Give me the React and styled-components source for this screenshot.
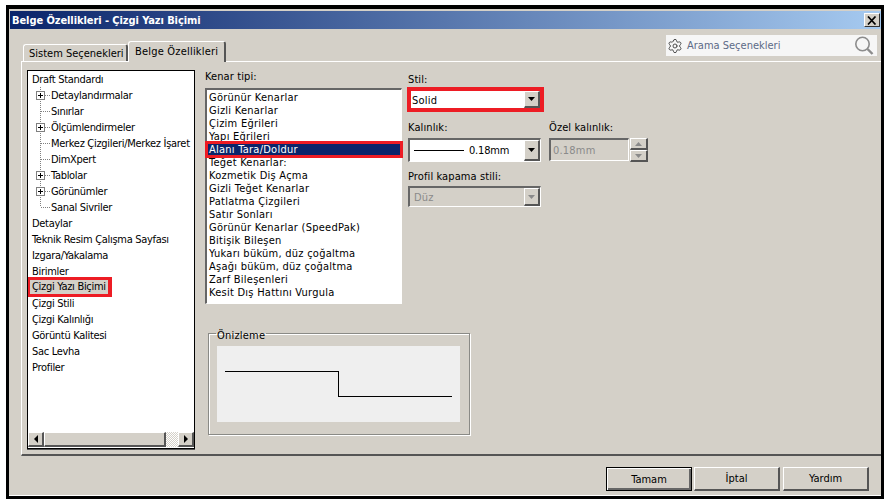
import React from "react";
import styled, { createGlobalStyle, css } from "styled-components";
import { Settings } from "lucide-react";

const GlobalStyle = createGlobalStyle`
  html, body {
    margin: 0;
    padding: 0;
    background: #fff;
  }
  body {
    font-family: "DejaVu Sans", "Liberation Sans", sans-serif;
    font-stretch: condensed;
    font-size: 11px;
    color: #000;
  }
`;

const raised = css`
  border-style: solid;
  border-width: 1px 2px 2px 1px;
  border-color: #fff #555 #555 #fff;
  background: #d4d0c8;
`;

const sunken = css`
  border-style: solid;
  border-width: 2px 1px 1px 2px;
  border-color: #666 #fff #fff #666;
`;

// Outer frame of the screenshot
const Page = styled.div`
  width: 887px;
  height: 503px;
  padding: 5px 3px 4px 6px;
  box-sizing: border-box;
  overflow: hidden;
`;

const Dialog = styled.div`
  height: 100%;
  box-sizing: border-box;
  border: 3px solid #000;
  border-top-width: 4px;
  background: #d4d0c8;
  box-shadow: inset 0 -1px 0 #fff;
  display: flex;
  flex-direction: column;
  padding-top: 2px;
`;

const TitleBar = styled.div`
  height: 18px;
  margin-left: 1px;
  background: linear-gradient(90deg, #0a246a 0%, #a6caf0 100%);
  display: flex;
  align-items: center;
  justify-content: space-between;
  padding: 0 1px 0 2px;
  flex: none;
`;

const TitleText = styled.span`
  color: #fff;
  font-weight: bold;
  font-size: 11px;
  letter-spacing: -0.08px;
`;

const CloseButton = styled.div`
  width: 16px;
  height: 14px;
  box-sizing: border-box;
  border-style: solid;
  border-width: 1px;
  border-color: #fff #333 #333 #fff;
  background: #d4d0c8;
  display: flex;
  align-items: center;
  justify-content: center;
`;

const TabRow = styled.div`
  height: 32px;
  flex: none;
  display: flex;
  justify-content: space-between;
  align-items: flex-start;
  padding-left: 14px;
`;

const Tabs = styled.div`
  height: 33px;
  display: flex;
  align-items: flex-end;
  position: relative;
  z-index: 1;
`;

const Tab = styled.div`
  box-sizing: border-box;
  height: ${p => (p.$active ? 21 : 17)}px;
  margin-bottom: ${p => (p.$active ? 0 : 1)}px;
  width: ${p => p.$width}px;
  padding: ${p => (p.$active ? "3px 0 0 6px" : "2px 0 0 5px")};
  border-style: solid;
  border-color: #fff #555 #d4d0c8 #fff;
  border-width: 1px 2px 0 1px;
  border-radius: 3px 3px 0 0;
  background: #d4d0c8;
  letter-spacing: ${p => (p.$active ? 0.2 : 0)}px;
  white-space: nowrap;
`;

const SearchBox = styled.div`
  width: 211px;
  height: 21px;
  margin: 6px 4px 0 0;
  background: #f6f6f6;
  display: flex;
  align-items: center;
  padding: 0 3px 0 1px;
  box-sizing: border-box;
  gap: 4px;
`;

const SearchText = styled.span`
  flex: 1;
  color: #5c6a86;
`;

const Panel = styled.div`
  height: 395px;
  flex: none;
  margin-left: 12px;
  box-sizing: border-box;
  border-top: 1px solid #fff;
  border-left: 1px solid #fff;
  border-bottom: 2px solid #555;
  padding: 8px 0 0 5px;
  display: flex;
  gap: 10px;
`;

const TreePane = styled.div`
  width: 168px;
  height: 379px;
  box-sizing: border-box;
  border: 1px solid #000;
  background: #fff;
  box-shadow: 0 1px 0 #555;
  display: flex;
  flex-direction: column;
  flex: none;
`;

const TreeBody = styled.div`
  flex: 1;
  overflow: hidden;
`;

const TreeRow = styled.div`
  height: 16px;
  display: flex;
  align-items: center;
  padding-left: 4px;
  white-space: nowrap;
  letter-spacing: -0.3px;
`;

const TreeLabel = styled.span`
  ${p => p.$marked && css`
    background: #d4d0c8;
    box-shadow: -1px 0 0 3px #ed1c24, 1px 0 0 3px #ed1c24;
    padding: 0 2px;
    margin-left: -2px;
    height: 14px;
    line-height: 14px;
  `}
`;

const ScrollBar = styled.div`
  height: 15px;
  margin: 0 0 1px 0;
  display: flex;
  flex: none;
`;

const ScrollButton = styled.div`
  ${raised}
  width: 16px;
  box-sizing: border-box;
  display: flex;
  align-items: center;
  justify-content: center;
  flex: none;
`;

const ScrollThumb = styled.div`
  ${raised}
  width: 122px;
  box-sizing: border-box;
`;

const ScrollTrack = styled.div`
  flex: 1;
  background-image: conic-gradient(#d4d0c8 25%, #fff 0 50%, #d4d0c8 0 75%, #fff 0);
  background-size: 2px 2px;
`;

const Content = styled.div`
  flex: 1;
  display: flex;
  flex-direction: column;
`;

const Columns = styled.div`
  display: flex;
  gap: 6px;
`;

const ListColumn = styled.div`
  width: 197px;
`;

const FieldLabel = styled.div`
  height: 13px;
  line-height: 13px;
  letter-spacing: 0.1px;
`;

const ListBox = styled.div`
  ${sunken}
  margin-top: 5px;
  height: 216px;
  box-sizing: border-box;
  background: #fff;
  padding-top: 1px;
`;

const ListRow = styled.div`
  height: 13px;
  line-height: 13px;
  padding-left: 2px;
  white-space: nowrap;
  letter-spacing: 0.25px;
  ${p => p.$selected && css`
    background: #0a246a;
    color: #fff;
    outline: 3px solid #ed1c24;
    outline-offset: -1px;
    position: relative;
  `}
`;

const SettingsColumn = styled.div`
  width: 240px;
  padding-top: 3px;
`;

// The red marker hides the bevel of the select it surrounds
const StyleHighlight = styled.div`
  width: 137px;
  height: 25px;
  margin: 1px 0 0 -1px;
  box-sizing: border-box;
  border: 4px solid #ed1c24;
  background: #fff;
  display: flex;
  align-items: stretch;
  padding-left: 1px;
`;

const SelectBox = styled.div`
  ${sunken}
  height: ${p => p.$height}px;
  width: ${p => p.$width || 133}px;
  box-sizing: border-box;
  background: ${p => (p.$disabled ? "#d4d0c8" : "#fff")};
  color: ${p => (p.$disabled ? "#8a8a8a" : "#000")};
  display: flex;
  align-items: center;
  padding-left: ${p => p.$pad ?? 2}px;
  flex: none;
`;

const SelectValue = styled.span`
  flex: 1;
  letter-spacing: ${p => p.$spacing ?? 0.2}px;
`;

const PlainValue = styled(SelectValue)`
  align-self: center;
  padding-top: 2px;
`;

const SelectArrow = styled.div`
  ${raised}
  width: 16px;
  align-self: stretch;
  box-sizing: border-box;
  display: flex;
  align-items: center;
  justify-content: center;
  flex: none;
`;

const WidthRow = styled.div`
  display: flex;
  gap: 8px;
  margin-top: 9px;
`;

const WidthField = styled.div`
  display: flex;
  flex-direction: column;
  gap: 4px;
`;

const LineSample = styled.span`
  width: 50px;
  height: 1px;
  background: #000;
  margin: 0 5px 0 3px;
`;

const SpinRow = styled.div`
  display: flex;
`;

const Spinner = styled.div`
  display: flex;
  flex-direction: column;
  margin-left: 1px;
  width: 18px;
`;

const SpinButton = styled.div`
  ${raised}
  height: 12px;
  box-sizing: border-box;
  display: flex;
  align-items: center;
  justify-content: center;
`;

const CapField = styled.div`
  margin-top: 8px;
  display: flex;
  flex-direction: column;
  gap: 3px;
`;

const PreviewGroup = styled.fieldset`
  width: 262px;
  height: 108px;
  box-sizing: border-box;
  margin: 23px 0 0 3px;
  padding: 0 9px 0 8px;
  border: 1px solid #8a8a86;
  box-shadow: 1px 1px 0 #fff, inset 1px 1px 0 #fff;
`;

const PreviewLegend = styled.legend`
  padding: 0 1px;
  margin-left: -1px;
  height: 13px;
  line-height: 17px;
  letter-spacing: 0.2px;
`;

const PreviewCanvas = styled.div`
  height: 76px;
  margin-top: 6px;
  background: #efefef;
  svg {
    display: block;
  }
`;

const Footer = styled.div`
  flex: 1;
  display: flex;
  justify-content: flex-end;
  align-items: flex-start;
  gap: 2px;
  padding: 11px 12px 0 0;
`;

const DialogButton = styled.div`
  width: 86px;
  height: 24px;
  box-sizing: border-box;
  border-style: solid;
  border-width: 1px 2px 2px 1px;
  border-color: #fff #555 #555 #fff;
  display: flex;
  align-items: center;
  justify-content: center;
  margin-right: ${p => (p.$wide ? 1 : 0)}px;
  ${p => p.$default && css`
    border-width: 1px;
    border-color: #000;
    box-shadow: inset 1px 1px 0 #fff, inset -2px -2px 0 #666;
  `}
`;

const treeItems = [
  { label: "Draft Standardı" },
  { label: "Detaylandırmalar", child: true, plus: true },
  { label: "Sınırlar", child: true },
  { label: "Ölçümlendirmeler", child: true, plus: true },
  { label: "Merkez Çizgileri/Merkez İşaret", child: true },
  { label: "DimXpert", child: true },
  { label: "Tablolar", child: true, plus: true },
  { label: "Görünümler", child: true, plus: true },
  { label: "Sanal Sivriler", child: true, last: true },
  { label: "Detaylar" },
  { label: "Teknik Resim Çalışma Sayfası" },
  { label: "Izgara/Yakalama" },
  { label: "Birimler" },
  { label: "Çizgi Yazı Biçimi", marked: true },
  { label: "Çizgi Stili" },
  { label: "Çizgi Kalınlığı" },
  { label: "Görüntü Kalitesi" },
  { label: "Sac Levha" },
  { label: "Profiler" },
];

const edgeTypes = [
  "Görünür Kenarlar",
  "Gizli Kenarlar",
  "Çizim Eğrileri",
  "Yapı Eğrileri",
  "Alanı Tara/Doldur",
  "Teğet Kenarlar:",
  "Kozmetik Diş Açma",
  "Gizli Teğet Kenarlar",
  "Patlatma Çizgileri",
  "Satır Sonları",
  "Görünür Kenarlar (SpeedPak)",
  "Bitişik Bileşen",
  "Yukarı büküm, düz çoğaltma",
  "Aşağı büküm, düz çoğaltma",
  "Zarf Bileşenleri",
  "Kesit Dış Hattını Vurgula",
];

const TreeGlyph = ({ plus, last }) => (
  <svg width="19" height="16" shapeRendering="crispEdges" style={{ flex: "none" }}>
    <path
      d={`M8.5 0V${last ? 8 : 16}M9 8.5H18`}
      stroke="#808080"
      strokeDasharray="1 1"
      fill="none"
    />
    {plus && (
      <>
        <rect x="4.5" y="4.5" width="8" height="8" fill="#fff" stroke="#808080" />
        <path d="M6 8.5H11M8.5 6V11" stroke="#000" fill="none" />
      </>
    )}
  </svg>
);

const Triangle = ({ dir, color = "#000", size = 4 }) => {
  const s = size;
  const points = {
    down: `0,0 ${s * 2 - 1},0 ${s - 0.5},${s}`,
    up: `0,${s} ${s * 2 - 1},${s} ${s - 0.5},0`,
    left: `${s},0 ${s},${s * 2} 0,${s}`,
    right: `0,0 0,${s * 2} ${s},${s}`,
  }[dir];
  const horizontal = dir === "left" || dir === "right";
  return (
    <svg width={horizontal ? s : s * 2 - 1} height={horizontal ? s * 2 : s}>
      <polygon points={points} fill={color} />
    </svg>
  );
};

const SearchGlyph = () => (
  <svg width="20" height="19" viewBox="0 0 20 19" fill="none">
    <circle cx="8.5" cy="8" r="6.7" stroke="#8c8c8c" strokeWidth="1.6" />
    <path d="M13.5 13l5 5" stroke="#8c8c8c" strokeWidth="2.4" />
  </svg>
);

const CloseGlyph = () => (
  <svg width="10" height="9" viewBox="0 0 10 9">
    <path d="M1 0.5l7.5 8M8.5 0.5L1 8.5" stroke="#000" strokeWidth="1.7" fill="none" />
  </svg>
);

const App = () => (
  <Page>
    <GlobalStyle />
    <Dialog>
      <TitleBar>
        <TitleText>Belge Özellikleri - Çizgi Yazı Biçimi</TitleText>
        <CloseButton>
          <CloseGlyph />
        </CloseButton>
      </TitleBar>

      <TabRow>
        <Tabs>
          <Tab $width={105}>Sistem Seçenekleri</Tab>
          <Tab $width={98} $active>Belge Özellikleri</Tab>
        </Tabs>
        <SearchBox>
          <Settings size={16} color="#444" strokeWidth={1.4} />
          <SearchText>Arama Seçenekleri</SearchText>
          <SearchGlyph />
        </SearchBox>
      </TabRow>

      <Panel>
        <TreePane>
          <TreeBody>
            {treeItems.map(item => (
              <TreeRow key={item.label}>
                {item.child && <TreeGlyph plus={item.plus} last={item.last} />}
                <TreeLabel $marked={item.marked}>{item.label}</TreeLabel>
              </TreeRow>
            ))}
          </TreeBody>
          <ScrollBar>
            <ScrollButton><Triangle dir="left" /></ScrollButton>
            <ScrollThumb />
            <ScrollTrack />
            <ScrollButton><Triangle dir="right" /></ScrollButton>
          </ScrollBar>
        </TreePane>

        <Content>
          <Columns>
            <ListColumn>
              <FieldLabel>Kenar tipi:</FieldLabel>
              <ListBox>
                {edgeTypes.map(name => (
                  <ListRow key={name} $selected={name === "Alanı Tara/Doldur"}>{name}</ListRow>
                ))}
              </ListBox>
            </ListColumn>

            <SettingsColumn>
              <FieldLabel>Stil:</FieldLabel>
              <StyleHighlight>
                <PlainValue>Solid</PlainValue>
                <SelectArrow><Triangle dir="down" /></SelectArrow>
              </StyleHighlight>

              <WidthRow>
                <WidthField>
                  <FieldLabel>Kalınlık:</FieldLabel>
                  <SelectBox $height={24} $pad={1}>
                    <LineSample />
                    <SelectValue $spacing={-0.2}>0.18mm</SelectValue>
                    <SelectArrow><Triangle dir="down" /></SelectArrow>
                  </SelectBox>
                </WidthField>
                <WidthField>
                  <FieldLabel>Özel kalınlık:</FieldLabel>
                  <SpinRow>
                    <SelectBox $height={23} $width={80} $disabled>
                      <SelectValue>0.18mm</SelectValue>
                    </SelectBox>
                    <Spinner>
                      <SpinButton><Triangle dir="up" color="#8a8a8a" /></SpinButton>
                      <SpinButton><Triangle dir="down" color="#8a8a8a" /></SpinButton>
                    </Spinner>
                  </SpinRow>
                </WidthField>
              </WidthRow>

              <CapField>
                <FieldLabel>Profil kapama stili:</FieldLabel>
                <SelectBox $height={21} $pad={4} $disabled>
                  <SelectValue>Düz</SelectValue>
                  <SelectArrow><Triangle dir="down" color="#8a8a8a" /></SelectArrow>
                </SelectBox>
              </CapField>
            </SettingsColumn>
          </Columns>

          <PreviewGroup>
            <PreviewLegend>Önizleme</PreviewLegend>
            <PreviewCanvas>
              <svg width="243" height="76" shapeRendering="crispEdges">
                <path d="M8 25.5H121.5V50.5H235" stroke="#000" fill="none" />
              </svg>
            </PreviewCanvas>
          </PreviewGroup>
        </Content>
      </Panel>

      <Footer>
        <DialogButton $default>Tamam</DialogButton>
        <DialogButton $wide>İptal</DialogButton>
        <DialogButton>Yardım</DialogButton>
      </Footer>
    </Dialog>
  </Page>
);

export default App;
